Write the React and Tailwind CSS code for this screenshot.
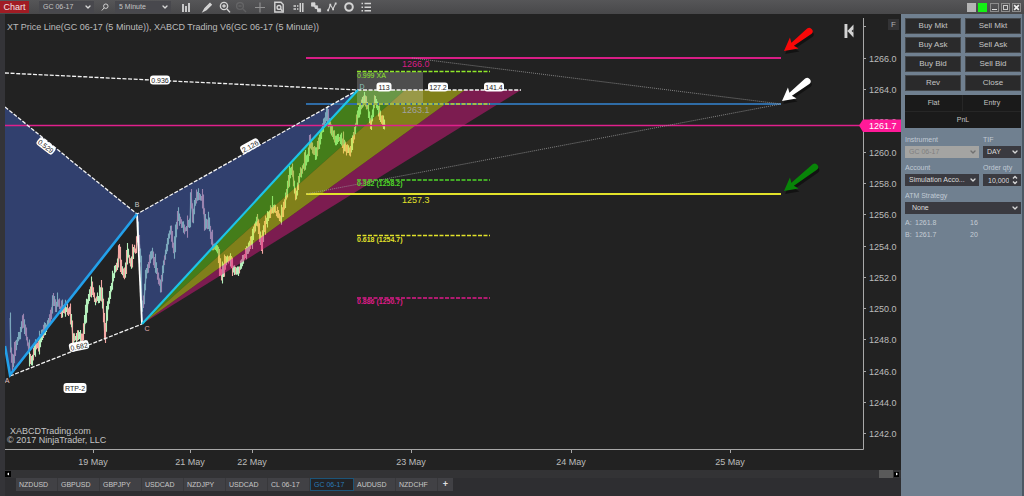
import React from "react";
import { ChevronDown } from "lucide-react";

/* ---------- price data ---------- */

const PRICE_PATH = [
  [10, 318], [11, 350], [13, 366], [16, 345], [20, 335], [23, 319], [26, 333], [29, 350],
  [31, 363], [36, 348], [39, 345], [43, 332], [48, 325], [52, 312], [53, 297], [56, 307],
  [58, 301], [61, 311], [65, 308], [70, 311], [72, 325], [73, 340], [76, 338], [80, 334],
  [82, 342], [85, 322], [89, 296], [92, 286], [95, 300], [99, 298], [102, 290], [104, 318],
  [105, 338], [108, 305], [112, 285], [115, 270], [118, 262], [119, 250], [122, 272],
  [125, 274], [128, 252], [131, 265], [134, 250], [136, 252], [138, 230], [141, 260],
  [142, 310], [144, 300], [146, 275], [150, 260], [152, 252], [156, 268], [161, 287],
  [164, 262], [168, 240], [171, 230], [174, 252], [178, 216], [182, 225], [186, 230],
  [190, 222], [191, 195], [193, 218], [195, 202], [198, 194], [203, 200], [205, 225],
  [209, 222], [213, 245], [218, 248], [220, 268], [222, 276], [225, 264], [230, 257],
  [233, 268], [238, 273], [244, 258], [248, 250], [252, 240], [257, 219], [262, 246],
  [264, 228], [268, 217], [273, 207], [281, 220], [286, 198], [289, 180], [292, 168],
  [296, 198], [300, 175], [305, 162], [308, 157], [310, 142], [316, 155], [319, 143],
  [322, 130], [327, 114], [331, 128], [336, 140], [341, 138], [347, 150], [350, 152],
  [353, 140], [357, 120], [361, 105], [365, 97], [368, 108], [371, 125], [375, 99],
  [378, 108], [381, 118], [385, 125],
];

function buildBars(points) {
  let seed = 7;
  const rand = () => {
    seed = (seed * 16807) % 2147483647;
    return seed / 2147483647;
  };
  let up = "";
  let down = "";
  for (let i = 0; i < points.length - 1; i += 1) {
    const [x0, y0] = points[i];
    const [x1, y1] = points[i + 1];
    const steps = Math.max(1, x1 - x0);
    for (let s = 0; s < steps; s += 1) {
      const a = y0 + ((y1 - y0) * s) / steps;
      const b = y0 + ((y1 - y0) * (s + 1)) / steps;
      const spike = rand() > 0.85 ? 5 : 0;
      const hi = Math.min(a, b) - 1 - rand() * 5 - spike;
      const lo = Math.max(a, b) + 1 + rand() * 5 + spike * rand();
      const seg = `M${x0 + s + 0.5} ${hi.toFixed(1)}V${lo.toFixed(1)}`;
      if (y1 < y0 !== rand() > 0.7) up += seg;
      else down += seg;
    }
  }
  return { up, down };
}

const BARS = buildBars(PRICE_PATH);
const LINE = "M" + PRICE_PATH.map((p) => p.join(" ")).join("L");

const PRICE_TICKS = [
  ["1266.0", 58], ["1264.0", 89], ["1262.0", 121], ["1260.0", 152], ["1258.0", 183],
  ["1256.0", 214], ["1254.0", 246], ["1252.0", 277], ["1250.0", 308], ["1248.0", 339],
  ["1246.0", 371], ["1244.0", 402], ["1242.0", 433],
];

const DATE_TICKS = [
  ["19 May", 93], ["21 May", 190], ["22 May", 252], ["23 May", 411], ["24 May", 571], ["25 May", 730],
];

/* ---------- chart parts ---------- */

function Pill({ x, y, w = 20, h = 9, angle = 0, children }) {
  return (
    <g transform={`translate(${x} ${y}) rotate(${angle})`}>
      <rect x={-w / 2} y={-h / 2} width={w} height={h} rx="3" fill="#fff" />
      <text y="3" textAnchor="middle" fontSize="7" fill="#222">{children}</text>
    </g>
  );
}

function Arrow({ x, y, length = 34, angle = -38, color }) {
  const d = `M0 0L13 -7L11 -2L${length - 2} -3.4A3.4 3.4 0 0 1 ${length - 2} 3.4L11 2L13 7Z`;
  return (
    <g transform={`translate(${x} ${y}) rotate(${angle})`}>
      <path d={d} transform="translate(-1 3)" fill="#000" opacity="0.45" />
      <path d={d} fill={color} />
    </g>
  );
}

function FibLevel({ y, color, label }) {
  return (
    <g>
      <path d={`M357 ${y}H490`} stroke={color} strokeWidth="1.4" strokeDasharray="4 1.5" />
      {label && (
        <text x="357" y={y + 6} fontSize="7" fontWeight="bold" fill={color}>{label}</text>
      )}
    </g>
  );
}

function PriceChart() {
  return (
    <svg
      viewBox="5 14 896 456"
      className="block h-auto w-full bg-[#222222]"
      fontFamily="'Liberation Sans', Arial, sans-serif"
      role="img"
      aria-label="GC 06-17 five minute price chart"
    >
      {/* price bars */}
      <g fill="none">
        <path d={LINE} stroke="#d8e6c8" strokeWidth="1.4" opacity="0.6" />
        <path d={BARS.up} stroke="#b4f0bc" strokeWidth="1.1" />
        <path d={BARS.down} stroke="#f4a8a4" strokeWidth="1.1" />
      </g>

      {/* harmonic pattern fills */}
      <path d="M5 107L137 214L10 376L5 346Z" fill="#405eba" fillOpacity="0.5" />
      <path d="M137 214L142 324L358 90Z" fill="#405eba" fillOpacity="0.5" />

      {/* fan */}
      <path d="M142 324L358 90H405Z" fill="#66d812" fillOpacity="0.5" />
      <path d="M142 324L405 90H465Z" fill="#dede12" fillOpacity="0.5" />
      <path d="M142 324L465 90H521Z" fill="#d6167e" fillOpacity="0.5" />

      {/* projection box */}
      <rect x="357" y="72" width="66" height="32" fill="#fff" fillOpacity="0.2" />

      {/* current price line */}
      <path d="M5 125.5H860" stroke="#e0208c" strokeWidth="1.5" />

      {/* target levels */}
      <path d="M306 58H781" stroke="#d81e86" strokeWidth="2" />
      <path d="M306 104H781" stroke="#2f6ca6" strokeWidth="2" />
      <path d="M306 194H781" stroke="#e2e22a" strokeWidth="2" />
      <path d="M412 58L781 104L306 194" fill="none" stroke="#9a9a9a" strokeWidth="0.8" strokeDasharray="1 1" />

      {/* pattern legs */}
      <g fill="none" stroke="#f4f4f4" strokeWidth="1.3" strokeDasharray="4 1.6">
        <path d="M5 73L358 90H521" />
        <path d="M5 107L137 214L358 90" />
        <path d="M10 376L142 324" />
      </g>
      <path d="M137 214L142 324" stroke="#fff" strokeWidth="1.8" />
      <path d="M5 346L10 375L137 214" fill="none" stroke="#23a0ea" strokeWidth="2.6" />
      <path d="M142 324L358 90" stroke="#1cc4e8" strokeWidth="2.2" />

      {/* levels */}
      <FibLevel y={71.5} color="#8fe82a" />
      <text x="357" y="78" fontSize="7" fill="#8fe82a">0.999 XA</text>
      <FibLevel y={104} color="#c8d62a" />
      <FibLevel y={180} color="#4fd828" label="0.382 (1258.2)" />
      <FibLevel y={235.5} color="#e2e22a" label="0.618 (1254.7)" />
      <FibLevel y={298} color="#e01a8a" label="0.886 (1250.7)" />

      <g fontSize="9">
        <text x="402" y="67" fill="#d81e86">1266.0</text>
        <text x="402" y="113" fill="#a0a0a0">1263.1</text>
        <text x="402" y="203" fill="#e2e22a">1257.3</text>
      </g>

      <Pill x={160} y={80}>0.936</Pill>
      <Pill x={46} y={146} angle={38}>0.529</Pill>
      <Pill x={250} y={146} angle={-29}>2.126</Pill>
      <Pill x={79} y={346} angle={-12}>0.682</Pill>
      <Pill x={75} y={388} w={23} h={10}>RTP-2</Pill>
      <Pill x={384} y={87} w={15}>113</Pill>
      <Pill x={438} y={87}>127.2</Pill>
      <Pill x={494} y={87}>141.4</Pill>

      <g fontSize="7" textAnchor="middle">
        <text x="7" y="383" fill="#e0c0c0">A</text>
        <text x="137" y="207" fill="#c8c8c8">B</text>
        <text x="147" y="331" fill="#e0b0b0">C</text>
        <text x="362" y="89" fill="#8cc4bc">D</text>
      </g>

      <Arrow x={784} y={51} color="#f80808" />
      <Arrow x={782} y={101} color="#ffffff" />
      <Arrow x={784} y={191} length={41} color="#088408" />

      {/* axes */}
      <path d="M863.5 18V449.5H5" fill="none" stroke="#a8a8a8" strokeWidth="1" />
      <path d="M863 26.5H866" stroke="#a8a8a8" />
      {PRICE_TICKS.map(([label, y]) => (
        <g key={label}>
          <path d={`M863 ${y + 0.5}H866`} stroke="#a8a8a8" />
          <text x="869" y={y + 4} fontSize="9" fill="#bcbcbc">{label}</text>
        </g>
      ))}
      {DATE_TICKS.map(([label, x]) => (
        <g key={label}>
          <path d={`M${x + 0.5} 450V453`} stroke="#a8a8a8" />
          <text x={x} y="465" fontSize="9" textAnchor="middle" fill="#bcbcbc">{label}</text>
        </g>
      ))}
      <path d="M859 125.5L863 119.5H901V132H863Z" fill="#ff1a98" />
      <text x="869" y="129" fontSize="9" fill="#fff">1261.7</text>

      <text x="7" y="30" fontSize="9" fill="#bcbcbc">
        XT Price Line(GC 06-17 (5 Minute)), XABCD Trading V6(GC 06-17 (5 Minute))
      </text>
      <text x="10" y="434" fontSize="9" fill="#c4c4c4">XABCDTrading.com</text>
      <text x="7" y="443" fontSize="9" fill="#c4c4c4">© 2017 NinjaTrader, LLC</text>
    </svg>
  );
}

/* ---------- toolbar ---------- */

function Icon({ children }) {
  return (
    <svg viewBox="0 0 12 12" className="size-3" fill="none" stroke="currentColor" strokeWidth="1.4" aria-hidden="true">
      {children}
    </svg>
  );
}

const TOOLS = [
  ["Chart style", "w-[22px]", <path d="M3 3V11M6 5V11M9 2V11" strokeWidth="1.8" />],
  ["Drawing tools", "w-[20px]", <path d="M2.5 10L4 7.5L9 2.5L10.2 3.7L5.2 8.7Z" fill="currentColor" />],
  ["Zoom in", "w-[16px]", <><circle cx="5" cy="5" r="3.6" /><path d="M8 8L11 11.4M3.2 5H6.8M5 3.2V6.8" /></>],
  ["Zoom out", "w-[16px] opacity-15", <><circle cx="5" cy="5" r="3.4" /><path d="M8 8L11 11M3.4 5H6.6" /></>],
  ["Cross hair", "w-[22px] opacity-50", <path d="M6 1.5V11.5M1 6.5H11" strokeWidth="1.1" />],
  ["Data box", "w-[16px]", <><path d="M1.8 1.3H8L10.2 3.5V11H1.8Z" /><circle cx="6" cy="6.4" r="1.9" /><path d="M7.4 7.8L9.4 10" /></>],
  ["Chart trader", "w-[22px]", <><path d="M1.5 5H4M1.5 8H4" strokeWidth="1.6" /><path d="M5 5H6.4M5 8H6.4M8.3 2V11M10.8 2V11" strokeWidth="1.5" /></>],
  ["Data series", "w-[14px]", <><path d="M3.5 4L9 9.5" /><path d="M1.5 1.8H5V5.2H1.5ZM7.6 7.8H10.6V10.8H7.6ZM5 4.8H7.6V7.4H5Z" fill="currentColor" strokeWidth="0.8" /></>],
  ["Indicators", "w-[18px]", <><path d="M2 10L4.3 4L7 8L9.6 2.4" strokeWidth="1.1" /><path d="M1.2 9.3H3M3.4 3.8H5.2M6.2 8.2H8M8.8 2.4H10.6" strokeWidth="2" /></>],
  ["Strategies", "w-[16px]", <circle cx="6" cy="6" r="3.8" strokeWidth="2" />],
  ["Properties", "w-[17px]", <path d="M1.5 2.6H3M1.5 6.2H3M1.5 9.8H3M4.5 2.6H11M4.5 6.2H11M4.5 9.8H11" strokeWidth="1.5" />],
];

function Select({ label, value, className = "", wrap = "", chevron = "text-[#d8d8d8]", disabled }) {
  return (
    <span className={`relative flex items-center ${wrap}`}>
      <select
        aria-label={label}
        defaultValue={value}
        disabled={disabled}
        className={`h-full w-full appearance-none truncate rounded-none border-0 outline-none ${className}`}
      >
        <option>{value}</option>
      </select>
      <ChevronDown className={`pointer-events-none absolute right-0.5 size-2 ${chevron}`} strokeWidth={4} />
    </span>
  );
}

function Toolbar() {
  return (
    <header className="flex h-[14px] items-center bg-gradient-to-b from-[#565658] to-[#48484a] pr-[3px] text-[#d4d4d4]">
      <button className="h-3 w-[29px] bg-[#a01c24] text-[9px] leading-3 text-[#f0e4e4]">Chart</button>
      <Select label="Instrument" value="GC 06-17" wrap="ml-[10px] h-3 w-[55px]" className="bg-[#48484d] pl-1 text-[7px] text-[#c4c4c4]" />
      <button aria-label="Search" className="mx-[5px] flex w-[11px] justify-center">
        <svg viewBox="0 0 10 10" className="size-2" fill="none" stroke="currentColor" strokeWidth="1.2"><circle cx="6" cy="4" r="2.8" /><path d="M4 6L1 9.4" /></svg>
      </button>
      <Select label="Interval" value="5 Minute" wrap="h-3 w-[56px]" className="bg-[#48484d] pl-1 text-[7px] text-[#c4c4c4]" />
      <nav className="ml-[4px] flex items-center">
        {TOOLS.map(([name, cls, shape]) => (
          <button key={name} aria-label={name} className={`flex justify-center ${cls}`}><Icon>{shape}</Icon></button>
        ))}
      </nav>
      <div className="ml-auto flex items-center gap-[2px]">
        <button aria-label="Link instrument" className="size-[9px] bg-[#b4b4b4]" />
        <button aria-label="Link interval" className="mr-px size-[9px] bg-[#14f014]" />
        <button aria-label="Minimize" className="flex size-[9px] items-end border border-[#8c8c8c] p-px"><span className="h-px w-full bg-[#dcdcdc]" /></button>
        <button aria-label="Maximize" className="flex size-[9px] border border-[#8c8c8c] p-px"><span className="size-full border border-[#c8c8c8]" /></button>
        <button aria-label="Close" className="flex size-[9px] items-center justify-center border border-[#8c8c8c]">
          <svg viewBox="0 0 6 6" className="size-[7px]" stroke="#f0f0f0" strokeWidth="1.4"><path d="M1 1L5 5M5 1L1 5" /></svg>
        </button>
      </div>
    </header>
  );
}

/* ---------- order entry ---------- */

const ORDER_BUTTONS = ["Buy Mkt", "Sell Mkt", "Buy Ask", "Sell Ask", "Buy Bid", "Sell Bid", "Rev", "Close"];

function Field({ label, children }) {
  return (
    <div className="min-w-0">
      <div className="h-3 text-[7px] leading-3 text-[#c0cad4]">{label}</div>
      {children}
    </div>
  );
}

function OrderPanel() {
  const dark = "bg-[#3a3a40] text-[7px] text-[#dcdcdc]";
  return (
    <aside className="w-[123px] shrink-0 border-r-2 border-[#4c5864] bg-[#708090] pt-1 pr-px pl-1">
      <div className="grid grid-cols-2 gap-x-1 gap-y-[3px]">
        {ORDER_BUTTONS.map((name) => (
          <button key={name} className="h-4 border border-[#44484c] bg-[#2a2a2b] text-[8px] leading-none text-[#c4c4c4]">
            {name}
          </button>
        ))}
      </div>
      <div className="mt-1 grid grid-cols-2 bg-[#1a1a1a] text-center text-[7px] leading-4 text-[#c4c4c4]">
        <span className="border-r border-b border-[#262626]">Flat</span>
        <span className="border-b border-[#262626]">Entry</span>
        <span className="col-span-2">PnL</span>
      </div>
      <div className="mt-[6px] grid grid-cols-[74px_1fr] gap-x-1 gap-y-1">
        <Field label="Instrument">
          <Select label="Instrument" value="GC 06-17" disabled wrap="h-3" chevron="text-[#707070]" className="bg-[#a4a4a2] pl-1 text-[7px] text-[#808080] opacity-100" />
        </Field>
        <Field label="TIF">
          <Select label="TIF" value="DAY" wrap="h-3" className={`pl-1 ${dark}`} />
        </Field>
        <Field label="Account">
          <Select label="Account" value="Simulation Acco..." wrap="h-3" className={`pl-1 ${dark}`} />
        </Field>
        <Field label="Order qty">
          <span className="flex h-3 items-center bg-[#3a3a40]">
            <input aria-label="Order qty" defaultValue="10,000" className={`h-full w-[26px] pl-[5px] outline-none ${dark}`} />
            <svg viewBox="0 0 8 10" className="ml-auto mr-0.5 h-2.5 w-2" fill="none" stroke="#d8d8d8" strokeWidth="1.4"><path d="M2 3.6L4 1.6L6 3.6M2 6.6L4 8.6L6 6.6" /></svg>
          </span>
        </Field>
        <div className="col-span-2">
          <Field label="ATM Strategy">
            <Select label="ATM Strategy" value="None" wrap="h-3" className={`pl-[7px] ${dark}`} />
          </Field>
        </div>
      </div>
      <dl className="mt-[3px] grid grid-cols-[10px_55px_1fr] text-[7px] leading-3 text-[#c4ccd4]">
        <dt>A:</dt><dd>1261.8</dd><dd>16</dd>
        <dt>B:</dt><dd>1261.7</dd><dd>20</dd>
      </dl>
    </aside>
  );
}

/* ---------- footer ---------- */

const TABS = ["NZDUSD", "GBPUSD", "GBPJPY", "USDCAD", "NZDJPY", "USDCAD", "CL 06-17", "GC 06-17", "AUDUSD", "NZDCHF"];

function Footer() {
  return (
    <footer className="bg-[#2e2e31] pb-[5px]">
      <div className="flex h-2 items-center bg-[#333335]">
        <span className="flex size-[6px] items-center justify-center bg-black"><svg viewBox="0 0 4 4" className="size-1"><path d="M3 0.5L1 2L3 3.5Z" fill="#fff" /></svg></span>
        <span className="ml-auto h-2 w-[14px] bg-[#5a5a5a]" />
        <span className="ml-px mr-0.5 flex size-[5px] items-center justify-center bg-black"><svg viewBox="0 0 4 4" className="size-1"><path d="M1 0.5L3 2L1 3.5Z" fill="#fff" /></svg></span>
      </div>
      <div className="flex h-[13px] pl-[11px]">
        {TABS.map((name, i) =>
          i === 7 ? (
            <button key={i} className="w-11 border border-[#1c5478] bg-[#222326] pl-[3px] text-left text-[7px] leading-none text-[#2a7ab8]">{name}</button>
          ) : (
            <button key={i} className="w-[42px] border-r border-[#38383b] bg-[#414145] pl-[3px] text-left text-[7px] leading-none text-[#c8c8c8]">{name}</button>
          )
        )}
        <button aria-label="Add tab" className="w-[15px] bg-[#414145] text-[9px] font-bold leading-none text-[#e0e0e0]">+</button>
      </div>
    </footer>
  );
}

export default function App() {
  return (
    <div className="flex min-h-screen flex-col bg-[#2e2e31] font-['Liberation_Sans',Arial,sans-serif]">
      <Toolbar />
      <div className="flex grow">
        <div className="w-[5px] shrink-0 bg-[#343438]" />
        <main className="min-w-0 grow">
          <div className="relative">
            <PriceChart />
            <button aria-label="Return to latest bar" className="absolute top-[10px] right-[47px]">
              <svg viewBox="0 0 10 14" className="h-[14px] w-[10px]" fill="#d4d4d4"><path d="M0.5 0H3.4V14H0.5ZM3.4 7L9.5 0.6V13.4Z" /><path d="M7.6 7L9.5 5.2V8.8Z" fill="#222222" /></svg>
            </button>
            <button className="absolute top-[5px] right-[2px] size-[11px] bg-[#333335] text-[8px] leading-none text-[#b0b0b0]">F</button>
          </div>
          <Footer />
        </main>
        <OrderPanel />
      </div>
    </div>
  );
}
